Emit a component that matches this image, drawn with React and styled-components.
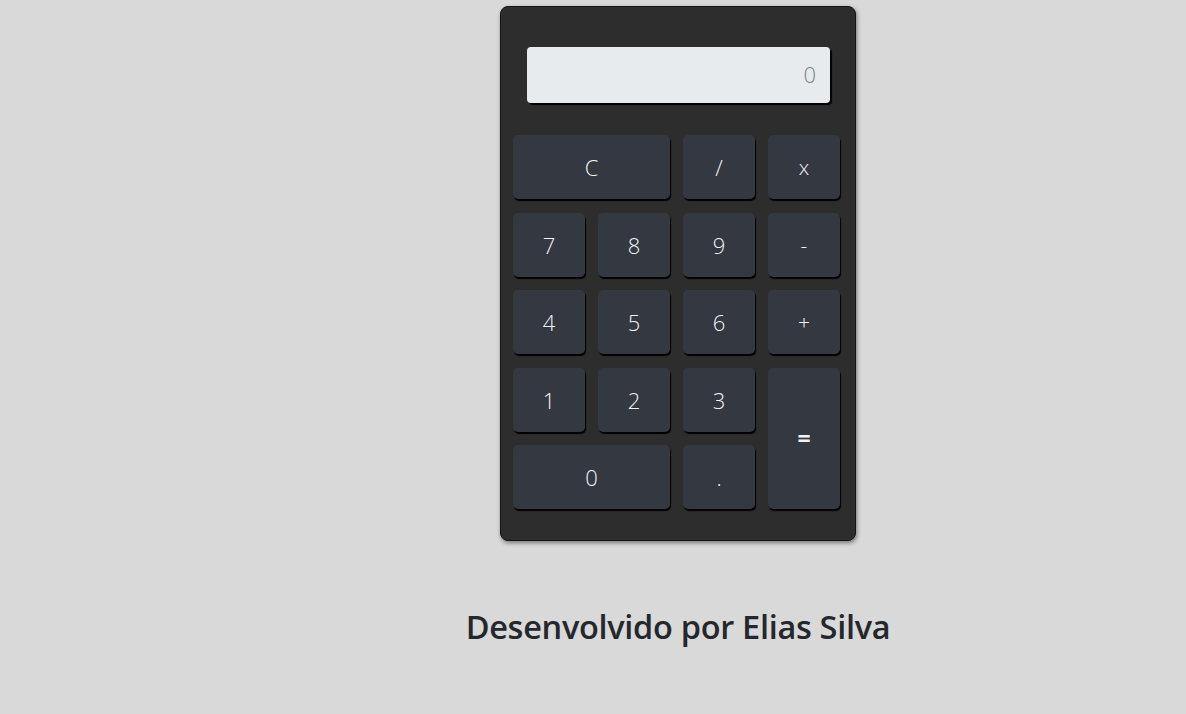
import React from "react";
import styled, { createGlobalStyle } from "styled-components";

const Global = createGlobalStyle`
  html, body { margin: 0; padding: 0; background: #d9d9d9; }
  body { font-family: "Open Sans", "DejaVu Sans", sans-serif; }
`;

const Page = styled.div`
  display: flex;
  flex-direction: column;
  align-items: center;
  padding: 6px 0 0 170px;
  min-height: 708px;
`;

const Calculator = styled.div`
  box-sizing: border-box;
  width: 356px;
  height: 535px;
  background: #2d2d2d;
  border: 1px solid #151515;
  border-radius: 8px;
  box-shadow: 1px 2px 4px rgba(0, 0, 0, 0.45);
  padding: 40px 15px 0 12px;
  display: flex;
  flex-direction: column;
`;

const Display = styled.div`
  box-sizing: border-box;
  height: 56px;
  margin: 0 10px 0 14px;
  background: #e8ebee;
  border-radius: 4px;
  box-shadow: 2px 2px 1px #000;
  display: flex;
  align-items: center;
  justify-content: flex-end;
  padding: 0 14px 2px;
  font-size: 22px;
  font-weight: 300;
  color: #7d8086;
`;

const Keys = styled.div`
  margin-top: 32px;
  display: grid;
  grid-template-columns: repeat(4, 72px);
  grid-auto-rows: 64px;
  column-gap: 13px;
  row-gap: 13.5px;
`;

const Key = styled.button`
  grid-column: span ${(p) => p.$cols || 1};
  grid-row: span ${(p) => p.$rows || 1};
  border: none;
  border-radius: 5px;
  background: #343841;
  box-shadow: 1px 2px 1px #000;
  color: #f1f3f5;
  font-family: "Open Sans", "DejaVu Sans", sans-serif;
  font-size: ${(p) => (p.$bold ? "23px" : p.$op ? "21px" : "22px")};
  font-weight: ${(p) => (p.$bold ? 700 : 300)};
  display: flex;
  align-items: center;
  justify-content: center;
  padding: 0;
  cursor: pointer;
`;

const Footer = styled.h2`
  margin: 63px 0 0;
  font-family: "Open Sans", "DejaVu Sans", sans-serif;
  font-size: 32.5px;
  font-weight: 600;
  letter-spacing: -0.3px;
  color: #24272c;
`;

const keys = [
  { l: "C", cols: 2 },
  { l: "/" },
  { l: "x", op: true },
  { l: "7" },
  { l: "8" },
  { l: "9" },
  { l: "-", op: true },
  { l: "4" },
  { l: "5" },
  { l: "6" },
  { l: "+", op: true },
  { l: "1" },
  { l: "2" },
  { l: "3" },
  { l: "=", rows: 2, bold: true, op: true },
  { l: "0", cols: 2 },
  { l: "." },
];

export default function App() {
  return (
    <>
      <Global />
      <Page>
        <Calculator>
          <Display>0</Display>
          <Keys>
            {keys.map((k) => (
              <Key key={k.l} $cols={k.cols} $rows={k.rows} $bold={k.bold} $op={k.op}>
                {k.l}
              </Key>
            ))}
          </Keys>
        </Calculator>
        <Footer>Desenvolvido por Elias Silva</Footer>
      </Page>
    </>
  );
}
